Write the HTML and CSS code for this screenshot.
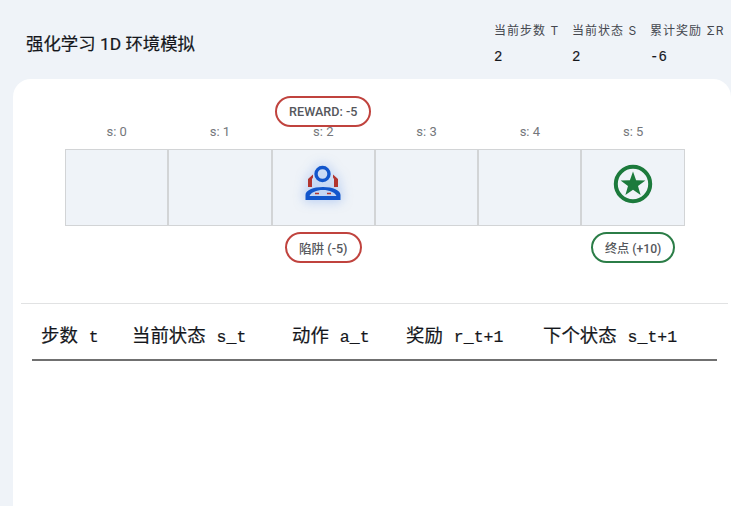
FILE: index.html
```html
<!DOCTYPE html>
<html lang="zh">
<head>
<meta charset="utf-8">
<title>强化学习 1D 环境模拟</title>
<link rel="stylesheet" href="styles.css">
</head>
<body>
<header class="header">
  <h1 class="title">强化学习 1D 环境模拟</h1>
  <div class="stats">
    <div class="stat"><div class="stat-label">当前步数 T</div><div class="stat-value">2</div></div>
    <div class="stat"><div class="stat-label">当前状态 S</div><div class="stat-value">2</div></div>
    <div class="stat"><div class="stat-label">累计奖励 ΣR</div><div class="stat-value">-6</div></div>
  </div>
</header>
<main class="card">
  <div class="sim">
    <div class="grid reward-row">
      <div class="marker"></div><div class="marker"></div>
      <div class="marker"><span class="pill pill-red">REWARD: -5</span></div>
    </div>
    <div class="grid labels">
      <span>s: 0</span><span>s: 1</span><span>s: 2</span><span>s: 3</span><span>s: 4</span><span>s: 5</span>
    </div>
    <div class="grid track">
      <div class="cell"></div>
      <div class="cell"></div>
      <div class="cell">
        <svg class="agent" width="38" height="38" viewBox="0 0 38 38">
          <path d="M4 22V14L9 9.500V12.500L8 14V22ZM34 22V14L29 9.500V12.500L30 14V22Z" fill="#b2352f"/>
          <circle cx="18.500" cy="9" r="6.500" fill="none" stroke="#1256cc" stroke-width="3.400"/>
          <path fill-rule="evenodd" d="M1.500 35V30C1.500 25.500 9 22 19 22S36.500 25.500 36.500 30V35ZM5.500 31H32.500C31 27.500 25.500 25 19 25S7 27.500 5.500 31Z" fill="#1256cc"/>
          <path d="M11 28.500H15M23 28.500H27" stroke="#b2352f" stroke-width="1.500"/>
        </svg>
      </div>
      <div class="cell"></div>
      <div class="cell"></div>
      <div class="cell">
        <svg class="goal" width="40" height="40" viewBox="0 0 40 40">
          <circle cx="20" cy="20" r="17.200" fill="none" stroke="#1c7a3c" stroke-width="4"/>
          <path d="M20 7.500L23.100 16.200L32.400 16.500L25 22.100L27.600 31L20 25.800L12.400 31L15 22.100L7.600 16.500L16.900 16.200Z" fill="#1c7a3c"/>
        </svg>
      </div>
    </div>
    <div class="grid markers">
      <div class="marker"></div>
      <div class="marker"></div>
      <div class="marker"><span class="pill pill-red">陷阱 (-5)</span></div>
      <div class="marker"></div>
      <div class="marker"></div>
      <div class="marker"><span class="pill pill-green">终点 (+10)</span></div>
    </div>
  </div>
  <hr class="divider">
  <table class="log">
    <colgroup>
      <col class="col-step"><col class="col-state"><col class="col-action"><col class="col-reward"><col class="col-next">
    </colgroup>
    <thead>
      <tr>
        <th>步数 <span class="var">t</span></th>
        <th>当前状态 <span class="var">s_t</span></th>
        <th>动作 <span class="var">a_t</span></th>
        <th>奖励 <span class="var">r_t+1</span></th>
        <th>下个状态 <span class="var">s_t+1</span></th>
      </tr>
    </thead>
  </table>
</main>
</body>
</html>
```
FILE: styles.css
```css
* { box-sizing: border-box; }
html, body { height: 100%; }
body {
  margin: 0;
  background: #eff3f8;
  overflow: hidden;
  font-family: Roboto, "Noto Sans CJK SC", sans-serif;
  color: #15171c;
}
.header {
  height: 79px;
  display: flex;
  justify-content: space-between;
  align-items: flex-start;
  padding: 0 0 0 26px;
}
.title {
  margin: 33px 0 0;
  font-size: 17.400px;
  line-height: 22px;
  font-weight: 400;
  -webkit-text-stroke: .2px currentColor;
}
.stats { display: flex; gap: 13px; padding-top: 24px; padding-right: 16px; }
.stat { width: 65px; white-space: nowrap; }
.stat-label {
  font-size: 12px;
  line-height: 14px;
  letter-spacing: 1px;
  color: #44474f;
  font-family: Inter, "Noto Sans CJK SC", sans-serif;
}
.stat-value {
  margin-top: 10px;
  font-family: "Liberation Mono", monospace;
  font-size: 14px;
  line-height: 18px;
  font-weight: 400;
  -webkit-text-stroke: .15px currentColor;
}
.card {
  margin-left: 13px;
  height: 427px;
  background: #fff;
  border-radius: 18px 18px 0 0;
  padding-top: 17px;
}
.sim { padding-left: 52px; width: 672px; }
.grid { display: grid; grid-template-columns: repeat(6, 103.300px); }
.reward-row { height: 28px; position: relative; z-index: 1; }
.pill {
  display: inline-flex;
  align-items: center;
  justify-content: center;
  height: 31px;
  padding: 0 12px;
  border: 2px solid #c0433e;
  border-radius: 16px;
  background: #fff;
  font-size: 12.600px;
  font-weight: 500;
  color: #55575c;
  white-space: nowrap;
}
.pill-green { border-color: #2b7d47; font-size: 12.200px; }
.labels {
  height: 25px;
  font-size: 13px;
  color: #74777b;
  text-align: center;
  line-height: 16px;
}
.track {
  height: 77px;
  border: 1px solid #d2d4d6;
  background: #eff3f8;
  width: 620px;
}
.cell {
  display: flex;
  align-items: center;
  justify-content: center;
  padding-bottom: 7px;
  border-right: 2px solid #d2d4d6;
}
.cell:last-child { border-right: 0; }
.agent { filter: drop-shadow(0 0 6px rgba(40, 110, 230, .5)); }
.goal { margin-right: 2px; }
.markers {
  margin-top: 6px;
  height: 31px;
}
.marker { display: flex; justify-content: center; }
.divider {
  margin: 40px 0 0 8px;
  border: 0;
  border-top: 1px solid #e1e2e3;
  width: 707px;
}
.log {
  margin: 18px 0 0 19px;
  width: 685px;
  table-layout: fixed;
  border-collapse: collapse;
  font-family: "Liberation Mono", "Noto Sans CJK SC", monospace;
  font-size: 18.400px;
  color: #15171c;
}
.var { font-size: 16.500px; }
.col-step { width: 91px; }
.col-state { width: 160px; }
.col-action { width: 114px; }
.col-reward { width: 137px; }
.col-next { width: 183px; }
.log th {
  text-align: left;
  font-weight: 400;
  -webkit-text-stroke: .2px currentColor;
  padding: 0 9px 6px;
  line-height: 31px;
  border-bottom: 2px solid #707070;
  white-space: nowrap;
}
```
